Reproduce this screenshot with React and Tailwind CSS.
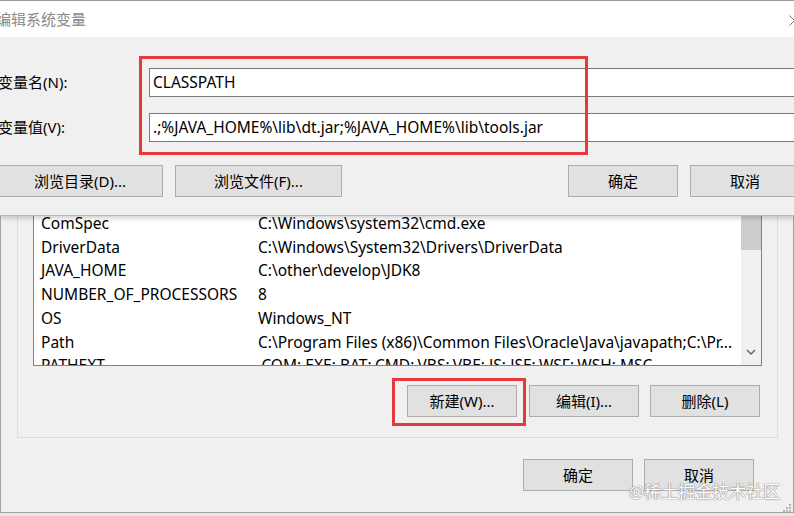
import React from 'react';

const FONT = { fontFamily: "'Noto Sans', 'Noto Sans CJK SC', sans-serif" };

const rows = [
  ['ComSpec', 'C:\\Windows\\system32\\cmd.exe'],
  ['DriverData', 'C:\\Windows\\System32\\Drivers\\DriverData'],
  ['JAVA_HOME', 'C:\\other\\develop\\JDK8'],
  ['NUMBER_OF_PROCESSORS', '8'],
  ['OS', 'Windows_NT'],
  ['Path', 'C:\\Program Files (x86)\\Common Files\\Oracle\\Java\\javapath;C:\\Pr...'],
  ['PATHEXT', '.COM;.EXE;.BAT;.CMD;.VBS;.VBE;.JS;.JSE;.WSF;.WSH;.MSC'],
];

const WinButton = ({ children, className = '' }) => (
  <div
    className={`h-[32px] shrink-0 border border-[#adadad] bg-[#e1e1e1] flex items-center justify-center text-[15px] text-black leading-none ${className}`}
  >
    {children}
  </div>
);

const App = () => {
  return (
    <div
      className="relative w-[794px] h-[516px] overflow-hidden bg-[#e6e6e6] text-black"
      style={FONT}
    >
      {/* Front dialog: 编辑系统变量 */}
      <div className="relative z-10 h-[216px] bg-[#f0f0f0] border-b border-[#b9b9b9] shadow-[0_2px_5px_rgba(0,0,0,0.2)] flex flex-col overflow-hidden">
        <div className="h-[37px] shrink-0 bg-white border-t border-[#9c9c9c] flex items-center justify-between">
          <span className="-ml-[4px] text-[15px] text-[#8a8a8a] leading-none">编辑系统变量</span>
          <svg width="11" height="11" viewBox="0 0 11 11" className="-mr-[6px] mt-[2px]">
            <path d="M0.5 0.5 L10.5 10.5 M10.5 0.5 L0.5 10.5" stroke="#7a7a7a" strokeWidth="1" />
          </svg>
        </div>

        <div className="pt-[31px]">
          <div className="flex items-center h-[29px]">
            <span className="-ml-[2px] w-[151px] shrink-0 text-[15px] leading-none">变量名(N):</span>
            <div className="h-[29px] w-[660px] shrink-0 bg-white border border-[#7a7a7a] flex items-center pl-[3px] text-[15.5px] leading-none">
              CLASSPATH
            </div>
          </div>
          <div className="flex items-center h-[29px] mt-[16px]">
            <span className="-ml-[2px] w-[151px] shrink-0 text-[15px] leading-none">变量值(V):</span>
            <div className="h-[29px] w-[660px] shrink-0 bg-white border border-[#7a7a7a] flex items-center pl-[3px] text-[15.5px] leading-none">
              .;%JAVA_HOME%\lib\dt.jar;%JAVA_HOME%\lib\tools.jar
            </div>
          </div>
          <div className="flex items-center mt-[23px]">
            <WinButton className="-ml-[3px] w-[166px]">浏览目录(D)...</WinButton>
            <WinButton className="ml-[12px] w-[167px]">浏览文件(F)...</WinButton>
            <div className="flex-1" />
            <WinButton className="w-[110px]">确定</WinButton>
            <WinButton className="ml-[12px] w-[110px] -mr-[6px]">取消</WinButton>
          </div>
        </div>
      </div>

      {/* Back dialog: 环境变量 */}
      <div className="h-[297px] bg-[#f0f0f0] border-l border-r border-b border-[#a3a3a3] w-[794px]">
        <div className="ml-[16px] w-[761px] h-[222px] border-l border-r border-b border-[#dcdcdc] flex flex-col">
          <div className="ml-[15px] w-[729px] h-[150px] shrink-0 bg-white border-l border-r border-b border-[#828282] flex overflow-hidden">
            <div className="flex-1 -mt-[4px] flex flex-col overflow-hidden">
              {rows.map(([name, value]) => (
                <div key={name} className="h-[23.7px] shrink-0 flex items-center text-[15.5px] leading-none">
                  <span className="pl-[7px] w-[224px] shrink-0 whitespace-nowrap">{name}</span>
                  <span className="whitespace-nowrap">{value}</span>
                </div>
              ))}
            </div>
            <div className="w-[20px] shrink-0 bg-[#f0f0f0] flex flex-col items-center">
              <div className="w-[20px] h-[34px] bg-[#cdcdcd]" />
              <div className="flex-1" />
              <svg width="10" height="6" viewBox="0 0 10 6" className="mb-[10px]">
                <path d="M1 1 L5 5 L9 1" stroke="#606060" strokeWidth="1.3" fill="none" />
              </svg>
            </div>
          </div>
          <div className="flex justify-end pr-[17px] mt-[19px]">
            <WinButton className="w-[110px]">新建(W)...</WinButton>
            <WinButton className="ml-[12px] w-[110px]">编辑(I)...</WinButton>
            <WinButton className="ml-[11px] w-[110px]">删除(L)</WinButton>
          </div>
        </div>
        <div className="flex justify-end pr-[39px] mt-[21px]">
          <WinButton className="w-[110px]">确定</WinButton>
          <WinButton className="ml-[11px] w-[110px]">取消</WinButton>
        </div>
      </div>

      {/* red annotation boxes */}
      <div className="absolute z-20 left-[139px] top-[56px] w-[449px] h-[99px] border-[3px] border-[#e5393d]" />
      <div className="absolute left-[392px] top-[378px] w-[134px] h-[48px] border-[3px] border-[#e5393d]" />

      {/* resize grip */}
      <svg width="9" height="9" viewBox="0 0 9 9" className="absolute left-[782px] top-[503px]">
        <rect x="7" y="1" width="2" height="2" fill="#b5b5b5" />
        <rect x="4" y="4" width="2" height="2" fill="#b5b5b5" />
        <rect x="7" y="4" width="2" height="2" fill="#b5b5b5" />
        <rect x="1" y="7" width="2" height="2" fill="#b5b5b5" />
        <rect x="4" y="7" width="2" height="2" fill="#b5b5b5" />
        <rect x="7" y="7" width="2" height="2" fill="#b5b5b5" />
      </svg>

      {/* watermark */}
      <div className="absolute left-[629px] top-[483px] text-[17px] leading-none text-white whitespace-nowrap [text-shadow:0_0_1px_#8a8a8a,0_0_1px_#8a8a8a,0_0_1px_#8a8a8a]">
        @稀土掘金技术社区
      </div>
    </div>
  );
};

export default App;
